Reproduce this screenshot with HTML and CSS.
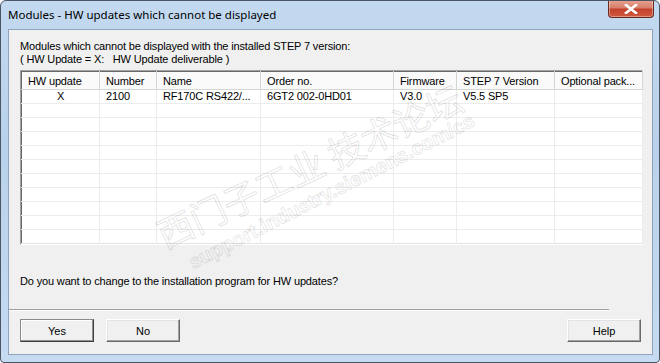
FILE: index.html
```html
<!DOCTYPE html>
<html>

<head>
  <meta charset="utf-8" />
  <title>Modules - HW updates which cannot be displayed</title>
  <link rel="stylesheet" href="styles.css">
</head>

<body>
  <div class="window">
    <div class="titlebar">
      <span class="title">Modules - HW updates which cannot be displayed</span>
      <button class="close-btn">
        <svg width="14" height="10" viewBox="0 0 14 10">
          <path d="M2 1 L12 9 M12 1 L2 9" stroke="#fff" stroke-width="2.6" stroke-linecap="square" />
        </svg>
      </button>
    </div>

    <div class="client">
      <p class="intro">
        Modules which cannot be displayed with the installed STEP 7 version:<br>
        ( HW Update =&nbsp;X:&nbsp;&nbsp;&nbsp;HW Update deliverable )
      </p>

      <div class="list">
        <table>
          <colgroup>
            <col style="width: 78px">
            <col style="width: 57px">
            <col style="width: 104px">
            <col style="width: 133px">
            <col style="width: 63px">
            <col style="width: 98px">
            <col style="width: 88px">
          </colgroup>
          <thead>
            <tr>
              <th>HW update</th>
              <th>Number</th>
              <th>Name</th>
              <th>Order no.</th>
              <th>Firmware</th>
              <th>STEP 7 Version</th>
              <th>Optional pack...</th>
            </tr>
          </thead>
          <tbody>
            <tr>
              <td class="center">X</td>
              <td>2100</td>
              <td>RF170C RS422/...</td>
              <td>6GT2 002-0HD01</td>
              <td>V3.0</td>
              <td>V5.5 SP5</td>
              <td></td>
            </tr>
            <tr><td></td><td></td><td></td><td></td><td></td><td></td><td></td></tr>
            <tr><td></td><td></td><td></td><td></td><td></td><td></td><td></td></tr>
            <tr><td></td><td></td><td></td><td></td><td></td><td></td><td></td></tr>
            <tr><td></td><td></td><td></td><td></td><td></td><td></td><td></td></tr>
            <tr><td></td><td></td><td></td><td></td><td></td><td></td><td></td></tr>
            <tr><td></td><td></td><td></td><td></td><td></td><td></td><td></td></tr>
            <tr><td></td><td></td><td></td><td></td><td></td><td></td><td></td></tr>
            <tr><td></td><td></td><td></td><td></td><td></td><td></td><td></td></tr>
            <tr><td></td><td></td><td></td><td></td><td></td><td></td><td></td></tr>
            <tr class="last"><td></td><td></td><td></td><td></td><td></td><td></td><td></td></tr>
          </tbody>
        </table>
      </div>

      <p class="question">Do you want to change to the installation program for HW updates?</p>

      <div class="separator"></div>

      <div class="buttons">
        <button class="btn btn-default">Yes</button>
        <button class="btn">No</button>
        <span class="spacer"></span>
        <button class="btn">Help</button>
      </div>
    </div>

    <div class="watermark">
      <div class="wm-cn">西门子工业&nbsp;技术论坛</div>
      <div class="wm-url">support.industry.siemens.com/cs</div>
    </div>
  </div>
</body>

</html>
```

FILE: styles.css
```css
body {
  margin: 0;
  background: #fff;
}

.window {
  position: relative;
  width: 660px;
  height: 363px;
  box-sizing: border-box;
  display: flex;
  flex-direction: column;
  border: 1px solid #4a5666;
  border-radius: 6px 6px 4px 4px;
  background: linear-gradient(to bottom, #c3d9f0 0%, #b9d1ea 40%, #c6dbf1 100%);
  overflow: hidden;
}

.titlebar {
  height: 28px;
  display: flex;
  align-items: flex-start;
  padding-left: 7px;
}

.title {
  margin-top: 6px;
  font-family: "Noto Sans", sans-serif;
  font-size: 11.5px;
  color: #000;
}

.close-btn {
  margin-left: auto;
  margin-right: 5px;
  width: 46px;
  height: 18px;
  margin-top: -1px;
  padding: 0;
  display: flex;
  align-items: center;
  justify-content: center;
  border: 1px solid #6b2a20;
  border-top: none;
  border-radius: 0 0 4px 4px;
  background: linear-gradient(to bottom, #e8a493 0%, #d7806b 45%, #c4422c 55%, #cf5a3f 100%);
  box-shadow: inset 0 0 0 1px rgba(255, 255, 255, 0.35);
}

.client {
  flex: 1;
  margin: 0 6px 7px 7px;
  border: 1px solid #8fa4bb;
  background: #f0f0f0;
  display: flex;
  flex-direction: column;
  padding: 10px 11px 0 11px;
  font-family: "Liberation Sans", Arial, sans-serif;
  font-size: 11px;
  letter-spacing: -0.15px;
  color: #000;
}

.intro {
  margin: 0;
  line-height: 13px;
}

.list {
  margin-top: 4px;
  width: 621px;
  border-top: 1px solid #a0a0a0;
  border-left: 1px solid #a0a0a0;
  border-right: 1px solid #fff;
  border-bottom: 1px solid #fff;
}

.list table {
  table-layout: fixed;
  width: 619px;
  border-collapse: collapse;
  background: #fff;
  border-top: 1px solid #696969;
  border-left: 1px solid #696969;
  border-right: 1px solid #e3e3e3;
  border-bottom: 1px solid #e3e3e3;
}

.list th {
  height: 17px;
  padding: 0 6px;
  text-align: left;
  font-weight: normal;
  background: #fafafa;
  border-right: 1px solid #d5d5d5;
  border-bottom: 1px solid #d5d5d5;
  white-space: nowrap;
  overflow: hidden;
}

.list td {
  height: 13px;
  padding: 0 6px;
  line-height: 13px;
  border-right: 1px solid #ececec;
  border-bottom: 1px solid #ececec;
  white-space: nowrap;
  overflow: hidden;
}

.list td.center {
  text-align: center;
}

.list tr.last td {
  border-bottom: none;
}

.question {
  margin: 30px 0 0;
  line-height: 13px;
}

.separator {
  margin: 21px 0 0 -11px;
  width: 600px;
  border-top: 1px solid #a0a0a0;
  border-bottom: 1px solid #fff;
}

.buttons {
  display: flex;
  margin-top: 8px;
  gap: 12px;
}

.spacer {
  flex: 1;
}

.btn {
  width: 74px;
  height: 23px;
  padding: 0;
  font-family: "Liberation Sans", Arial, sans-serif;
  font-size: 11px;
  color: #000;
  background: #f0f0f0;
  border: 1px solid;
  border-color: #fff #696969 #696969 #fff;
  box-shadow: inset -1px -1px 0 #a0a0a0, inset 1px 1px 0 #e3e3e3;
}

.btn-default {
  border-color: #8a8a8a #404040 #404040 #8a8a8a;
  box-shadow: inset -1px -1px 0 #909090, inset 1px 1px 0 #fff;
}

.watermark {
  position: absolute;
  left: 0;
  top: 0;
  pointer-events: none;
}

.wm-cn {
  position: absolute;
  left: 165px;
  top: 214px;
  transform-origin: left bottom;
  transform: rotate(-25deg);
  font-family: "Noto Sans CJK SC", sans-serif;
  font-size: 36px;
  line-height: 36px;
  white-space: nowrap;
  color: rgba(0, 0, 0, 0.02);
  -webkit-text-stroke: 1px rgba(0, 0, 0, 0.12);
}

.wm-url {
  position: absolute;
  left: 194px;
  top: 250px;
  transform-origin: left bottom;
  transform: rotate(-27deg);
  font-family: "Liberation Sans", Arial, sans-serif;
  font-size: 20px;
  font-weight: bold;
  line-height: 22px;
  white-space: nowrap;
  color: rgba(0, 0, 0, 0.02);
  -webkit-text-stroke: 1px rgba(0, 0, 0, 0.11);
}
```
